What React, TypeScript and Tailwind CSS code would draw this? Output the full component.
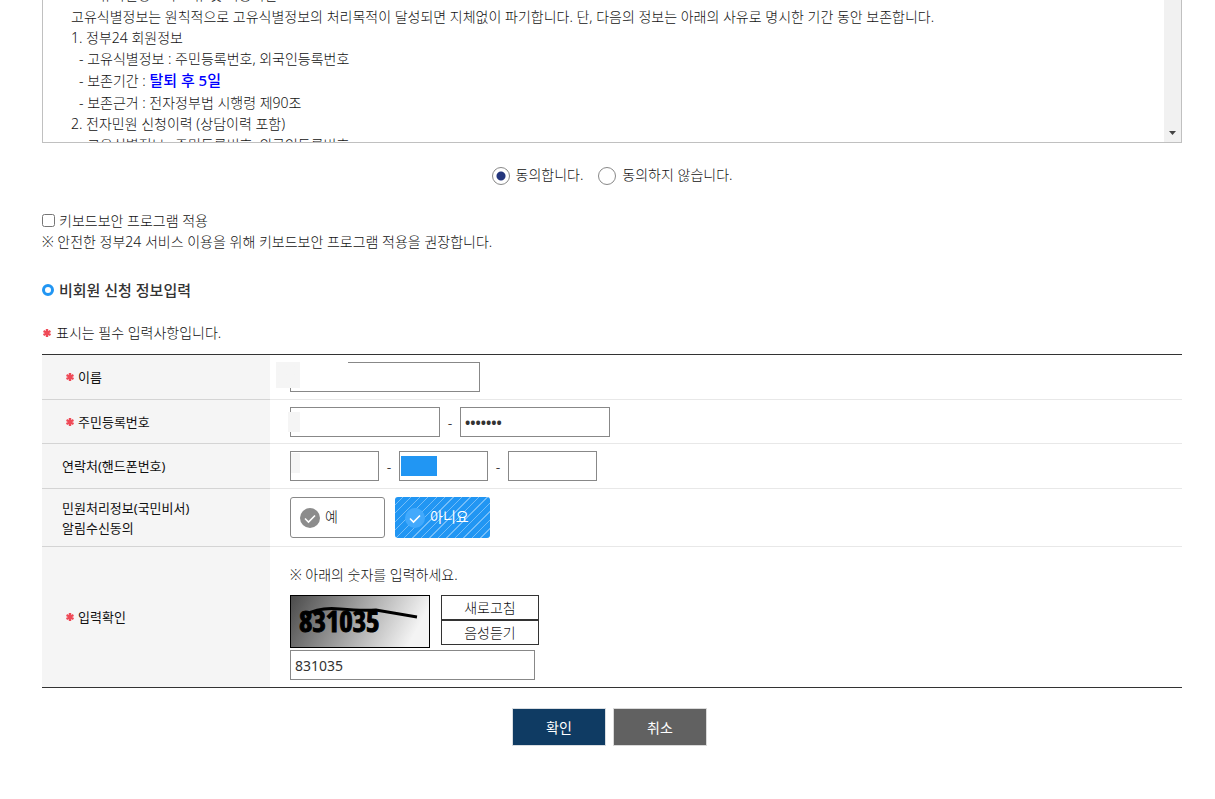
import { useState } from 'react';
import type { ReactNode } from 'react';

const inputBase = 'h-[30px] border border-[#888] bg-white px-1 text-[14px] text-[#333] outline-none';

const Star = () => (
  <svg viewBox="0 0 8 8" className="inline-block h-2 w-2 shrink-0 text-[#ef4a57]" aria-hidden="true">
    <path d="M4 0v8M0.5 2l7 4M0.5 6l7-4" stroke="currentColor" strokeWidth="2.4" fill="none" />
  </svg>
);

const Check = ({ color }: { color: string }) => (
  <svg viewBox="0 0 20 20" className="h-5 w-5 shrink-0" aria-hidden="true">
    <circle cx="10" cy="10" r="10" fill={color} />
    <path d="M5 10.5l3.5 3.5 6.5-6.5" stroke="#fff" strokeWidth="1.6" fill="none" />
  </svg>
);

interface RowProps {
  label: ReactNode;
  htmlFor?: string;
  required?: boolean;
  last?: boolean;
  children: ReactNode;
}

const Row = ({ label, htmlFor, required, last, children }: RowProps) => (
  <tr>
    <th
      scope="row"
      className={`w-[228px] bg-[#f5f5f5] pl-5 text-left text-[13px] leading-5 font-normal ${last ? '' : 'border-b border-[#d4d4d4]'}`}
    >
      <label htmlFor={htmlFor} className={required ? 'flex items-center gap-1 pl-1' : 'block'}>
        {required && <Star />}
        <span>{label}</span>
      </label>
    </th>
    <td className={`pt-[7px] pl-5 ${last ? 'pb-[7px]' : 'border-b border-[#e8e8e8] pb-[6px]'}`}>{children}</td>
  </tr>
);

const Terms = () => (
  <section className="flex h-[143px] overflow-hidden border-x border-b border-[#c0c0c0]">
    <div className="-mt-4 flex-1 pl-7 leading-[21px] whitespace-pre">
      <p className="leading-[22px]">4. 고유식별정보의 보유 및 이용기간</p>
      <p>고유식별정보는 원칙적으로 고유식별정보의 처리목적이 달성되면 지체없이 파기합니다. 단, 다음의 정보는 아래의 사유로 명시한 기간 동안 보존합니다.</p>
      <p>1. 정부24 회원정보</p>
      <p className="pl-2">- 고유식별정보 : 주민등록번호, 외국인등록번호</p>
      <p className="pl-2 leading-[22px]">
        - 보존기간 : <strong className="text-[15px] font-medium text-[#0000ff]">탈퇴 후 5일</strong>
      </p>
      <p className="pl-2">- 보존근거 : 전자정부법 시행령 제90조</p>
      <p>2. 전자민원 신청이력 (상담이력 포함)</p>
      <p className="pl-2">- 고유식별정보 : 주민등록번호, 외국인등록번호</p>
    </div>
    <div className="flex w-[17px] items-end justify-center bg-[#f1f1f1] pb-[7px]">
      <svg viewBox="0 0 7 4" className="h-1 w-[7px]" aria-hidden="true">
        <path d="M0 0h7L3.5 4z" fill="#444" />
      </svg>
    </div>
  </section>
);

export default function App() {
  const [agree, setAgree] = useState('yes');
  const [notify, setNotify] = useState('no');
  const [captcha, setCaptcha] = useState('831035');

  const radio =
    'mt-[2px] h-[18px] w-[18px] appearance-none rounded-full border border-[#888] bg-white checked:bg-[radial-gradient(circle,#24367d_4px,transparent_5px)]';

  return (
    <main className="mr-[33px] ml-[42px] font-['Noto_Sans','Noto_Sans_CJK_KR',sans-serif] text-[14px] font-light text-[#111]">
      <Terms />

      <div className="mt-[22px] flex h-5 items-center justify-center gap-[15px]">
        <label className="flex items-center gap-[6px]">
          <input type="radio" name="agree" className={radio} checked={agree === 'yes'} onChange={() => setAgree('yes')} />
          <span className="pb-[2px]">동의합니다.</span>
        </label>
        <label className="flex items-center gap-[6px]">
          <input type="radio" name="agree" className={radio} checked={agree === 'no'} onChange={() => setAgree('no')} />
          <span className="pb-[2px]">동의하지 않습니다.</span>
        </label>
      </div>

      <div className="mt-[25px] leading-[21px]">
        <label className="flex items-center gap-1">
          <input type="checkbox" className="h-[13px] w-[13px]" />
          키보드보안 프로그램 적용
        </label>
        <p>※ 안전한 정부24 서비스 이용을 위해 키보드보안 프로그램 적용을 권장합니다.</p>
      </div>

      <h2 className="mt-[27px] flex h-[22px] items-center gap-[5px] text-[15px] font-medium text-[#333]">
        <span className="h-3 w-3 rounded-full border-[3px] border-[#2196f3]" />
        비회원 신청 정보입력
      </h2>

      <p className="mt-[21px] mb-[11px] flex h-[21px] items-center gap-[5px] pl-px">
        <Star />
        표시는 필수 입력사항입니다.
      </p>

      <table className="w-full border-separate border-spacing-0 border-y border-[#333]">
        <tbody>
          <Row label="이름" htmlFor="name" required>
            <div className="relative flex pb-px">
              <input id="name" type="text" className={`${inputBase} w-[190px]`} />
              <span className="absolute top-0 -left-[14px] h-[26px] w-[72px] bg-linear-to-r from-[#f5f5f5] from-[24px] to-white to-[24px]" />
            </div>
          </Row>
          <Row label="주민등록번호" htmlFor="rrn1" required>
            <div className="relative flex items-center">
              <input id="rrn1" type="text" className={`${inputBase} w-[150px]`} />
              <span className="w-5 text-center">-</span>
              <input type="password" aria-label="주민등록번호 뒷자리" defaultValue="0000000" className={`${inputBase} w-[150px] font-bold`} />
              <span className="absolute top-[5px] -left-[2px] h-5 w-3 bg-[#f5f5f5]" />
            </div>
          </Row>
          <Row label="연락처(핸드폰번호)" htmlFor="tel1">
            <div className="relative flex items-center pb-px">
              <input id="tel1" type="tel" className={`${inputBase} w-[89px]`} />
              <span className="w-5 text-center">-</span>
              <div className="relative flex">
                <input type="tel" aria-label="연락처 가운데 자리" className={`${inputBase} w-[89px]`} />
                <span className="absolute top-[5px] left-[2px] h-5 w-9 bg-[#2196f3]" />
              </div>
              <span className="w-5 text-center">-</span>
              <input type="tel" aria-label="연락처 끝자리" className={`${inputBase} w-[89px]`} />
              <span className="absolute top-[2px] left-px h-5 w-[9px] bg-[#f5f5f5]" />
            </div>
          </Row>
          <Row label={<>민원처리정보(국민비서)<br />알림수신동의</>}>
            <div className="flex gap-[10px] pt-px pb-[2px]">
              <button
                type="button"
                aria-pressed={notify === 'yes'}
                onClick={() => setNotify('yes')}
                className="flex h-[41px] w-[95px] items-center gap-[5px] rounded-[3px] border border-[#888] bg-white pl-[9px]"
              >
                <Check color="#8c8c8c" />
                <span className="pb-[2px]">예</span>
              </button>
              <button
                type="button"
                aria-pressed={notify === 'no'}
                onClick={() => setNotify('no')}
                className="flex h-[41px] w-[95px] items-center gap-[5px] rounded-[3px] bg-[#2196f3] bg-[repeating-linear-gradient(135deg,transparent_0px,transparent_5px,#74bdf8_5px,#74bdf8_6px)] pl-[10px] font-normal text-white"
              >
                <Check color="#42a9fc" />
                <span className="pb-[2px]">아니요</span>
              </button>
            </div>
          </Row>
          <Row label="입력확인" htmlFor="captcha" required last>
            <p className="mt-[10px] mb-[10px] leading-[21px]">※ 아래의 숫자를 입력하세요.</p>
            <div className="flex gap-[11px]">
              <svg viewBox="0 0 140 53" className="h-[53px] w-[140px]" role="img" aria-label="831035">
                <defs>
                  <linearGradient id="shade" x1="0" y1="0" x2="1" y2="0.2">
                    <stop offset="0" stopColor="#4a4a4a" />
                    <stop offset="1" stopColor="#f4f4f4" />
                  </linearGradient>
                </defs>
                <rect x="0.5" y="0.5" width="139" height="52" fill="url(#shade)" stroke="#000" />
                <text
                  x="9"
                  y="37"
                  fontFamily="'Liberation Sans Narrow', 'Open Sans Condensed', 'Noto Sans', sans-serif"
                  fontSize="29"
                  fontWeight="700"
                  stroke="#000"
                  strokeWidth="1"
                >
                  831035
                </text>
                <path d="M16 20Q28 12 50 14T86 15L127 22" stroke="#000" strokeWidth="3" fill="none" />
              </svg>
              <div className="flex w-[98px] flex-col">
                <button type="button" className="h-[25px] border border-[#333] bg-white">새로고침</button>
                <button type="button" className="h-[25px] border border-[#333] bg-white">음성듣기</button>
              </div>
            </div>
            <input
              id="captcha"
              type="text"
              value={captcha}
              onChange={(e) => setCaptcha(e.target.value)}
              className={`${inputBase} mt-[2px] block w-[245px] font-normal`}
            />
          </Row>
        </tbody>
      </table>

      <div className="mt-5 flex justify-center gap-[7px] pr-[5px] font-normal text-white">
        <button type="submit" className="h-[38px] w-[94px] border border-[#d9dde1] bg-[#0f3b63]">확인</button>
        <button type="button" className="h-[38px] w-[94px] border border-[#d9d9d9] bg-[#616161]">취소</button>
      </div>
    </main>
  );
}
